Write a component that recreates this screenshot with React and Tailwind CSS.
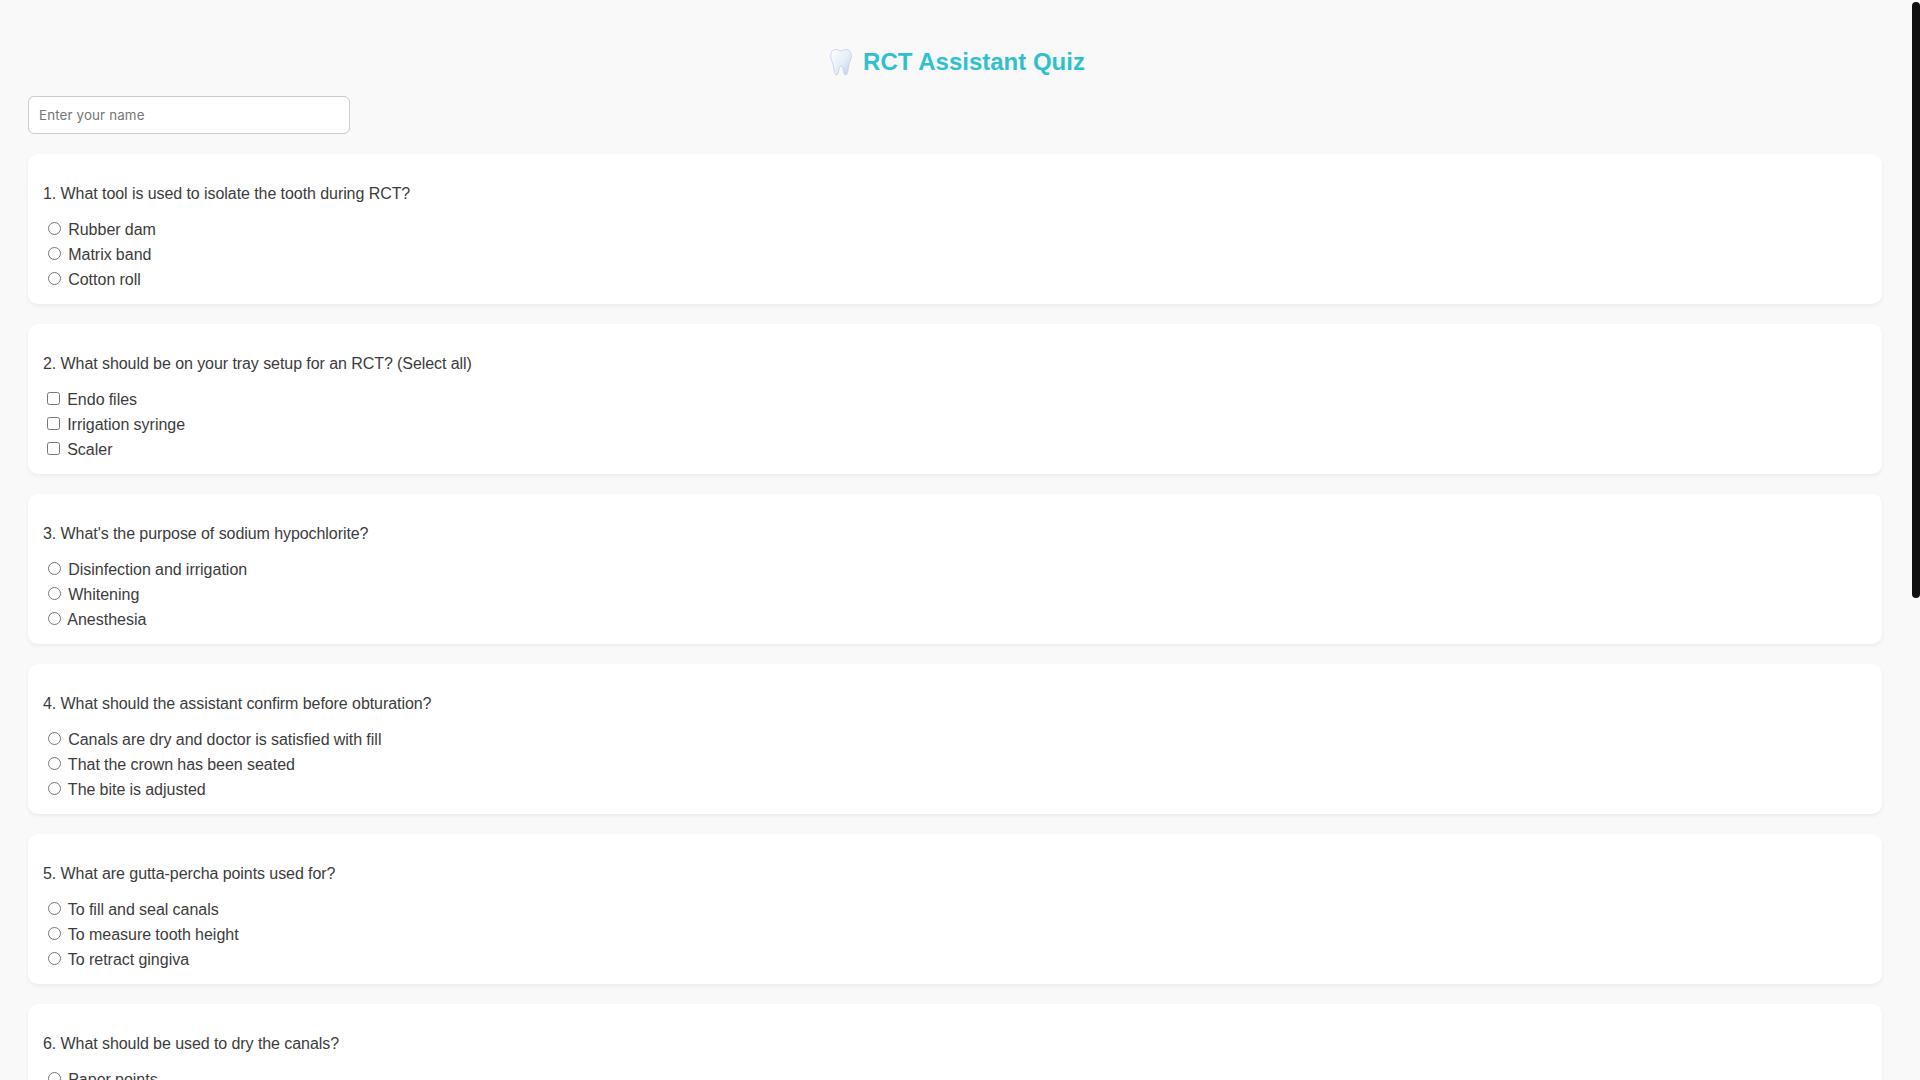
const QUESTIONS = [
  { q: "1. What tool is used to isolate the tooth during RCT?", type: "radio", options: ["Rubber dam", "Matrix band", "Cotton roll"] },
  { q: "2. What should be on your tray setup for an RCT? (Select all)", type: "checkbox", options: ["Endo files", "Irrigation syringe", "Scaler"] },
  { q: "3. What's the purpose of sodium hypochlorite?", type: "radio", options: ["Disinfection and irrigation", "Whitening", "Anesthesia"] },
  { q: "4. What should the assistant confirm before obturation?", type: "radio", options: ["Canals are dry and doctor is satisfied with fill", "That the crown has been seated", "The bite is adjusted"] },
  { q: "5. What are gutta-percha points used for?", type: "radio", options: ["To fill and seal canals", "To measure tooth height", "To retract gingiva"] },
  { q: "6. What should be used to dry the canals?", type: "radio", options: ["Paper points", "Cotton pellets", "Air syringe"] },
];

const Tooth = () => (
  <svg width="31" height="30" viewBox="0 0 31 30" className="shrink-0 -mt-px">
    <defs>
      <linearGradient id="toothFill" x1="0" y1="0" x2="1" y2="1">
        <stop offset="0" stopColor="#ffffff" />
        <stop offset="0.55" stopColor="#e6edf8" />
        <stop offset="1" stopColor="#bccbe8" />
      </linearGradient>
    </defs>
    <path
      d="M11 2.500C7.500 2.500 5.700 5.500 5.700 9c0 3.500 1.500 5.500 2.300 8.500.8 3.200 1 10.500 3.600 10.500 2.600 0 1.600-9 4.400-9s1.800 9 4.400 9c2.600 0 2.800-7.300 3.600-10.500.8-3 2.300-5 2.300-8.500 0-3.500-1.800-6.500-5.300-6.500-2.200 0-3.100 1.400-5 1.400s-2.800-1.400-5-1.400z"
      fill="url(#toothFill)"
      stroke="#c9d6ee"
      strokeWidth="1"
    />
  </svg>
);

const Question = ({ item }) => (
  <div className="bg-white rounded-[10px] shadow-[0_2px_4px_rgba(0,0,0,0.06)] px-[15px] pt-[31px] h-[150px] shrink-0">
    <p className="text-[16px] leading-[18px] tracking-[-0.07px] text-[#3c3c3c] mb-[14px]">{item.q}</p>
    {item.options.map((opt) => (
      <label key={opt} className="block h-[25px] leading-[25px] text-[16px] text-[#3c3c3c] [word-spacing:-0.3px]">
        <input
          type={item.type}
          name={item.q}
          className={item.type === "radio" ? "w-[13px] h-[13px] mt-[3px] mr-[3px] ml-[5px]" : "w-[13px] h-[13px] mt-[3px] mr-[3px] mb-[3px] ml-[4px]"}
        />{" "}
        {opt}
      </label>
    ))}
  </div>
);

export default function App() {
  return (
    <div className="flex h-screen overflow-hidden bg-[#f9f9f9] font-['Liberation_Sans',sans-serif]">
      <main className="flex-1 min-w-0 overflow-hidden pl-[28px] pr-[30px]">
        <h1 className="flex items-center justify-center gap-[7px] pt-[36px] h-[96px] pb-[8px] text-[24px] font-bold text-[#2fc0d0]">
          <Tooth />
          RCT Assistant Quiz
        </h1>
        <input
          type="text"
          placeholder="Enter your name"
          className="block w-[322px] h-[38px] px-[10px] bg-white border border-[#ccc] rounded-[6px] text-[13.333px] tracking-[0.15px] font-['Inter',sans-serif] placeholder:text-[#757575] mb-[20px]"
        />
        <div className="flex flex-col gap-[20px]">
          {QUESTIONS.map((item) => (
            <Question key={item.q} item={item} />
          ))}
        </div>
      </main>
      {/* scrollbar */}
      <div className="w-[8px] shrink-0 bg-[#f9f9f9]">
        <div className="h-[596px] mt-[2px] bg-[#111] rounded-[4px]" />
      </div>
    </div>
  );
}
